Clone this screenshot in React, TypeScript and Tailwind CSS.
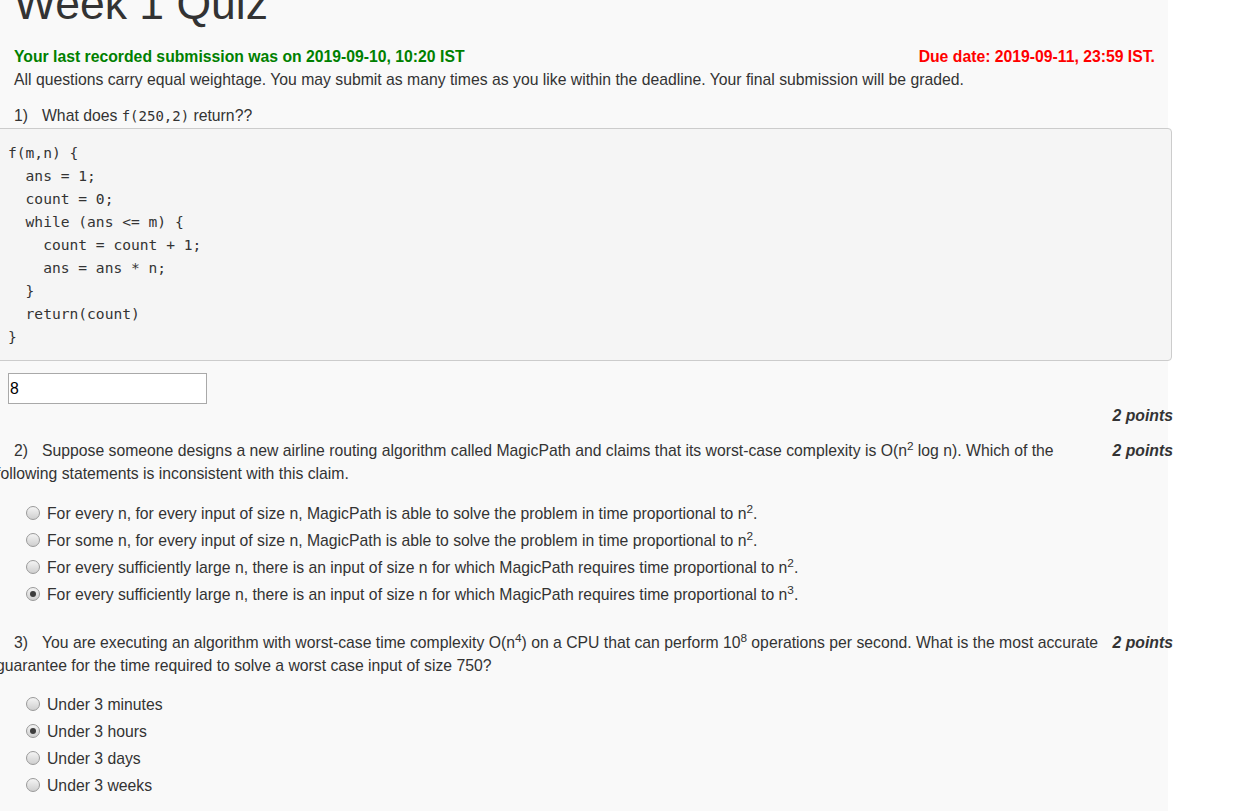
import type { ReactNode } from 'react';

const CODE = [
  'f(m,n) {',
  '  ans = 1;',
  '  count = 0;',
  '  while (ans <= m) {',
  '    count = count + 1;',
  '    ans = ans * n;',
  '  }',
  '  return(count)',
  '}',
];

function Radio({ checked }: { checked?: boolean }) {
  return (
    <span className="w-[14px] h-[14px] rounded-full border border-[#9a9a9a] bg-linear-to-b from-[#f4f4f4] to-[#cfcfcf] flex items-center justify-center shrink-0">
      {checked && <span className="w-[6px] h-[6px] rounded-full bg-[#3d3d3d]" />}
    </span>
  );
}

function Option({ checked, children }: { checked?: boolean; children: ReactNode }) {
  return (
    <div className="flex items-center gap-[7px] h-[27px]">
      <Radio checked={checked} />
      <span>{children}</span>
    </div>
  );
}

function Question({ num, points, children }: { num: string; points?: boolean; children: ReactNode }) {
  return (
    <div className="-ml-[18px] w-[1177px] flex">
      <p className="flex-1 indent-[18px]">
        <span className="inline-block w-[28px] indent-0">{num}</span>
        {children}
      </p>
      {points && <span className="pl-[14px] font-bold italic shrink-0">2 points</span>}
    </div>
  );
}

export default function App() {
  return (
    <div className="min-h-screen bg-white overflow-hidden font-['Liberation_Sans',Arial,sans-serif] text-[15.75px] leading-[23px] text-[#333]">
      <div className="w-[1168px] min-h-screen bg-[#f9f9f9] pl-[14px] pr-[13px] pb-[20px]">
        <h1 className="-mt-[21px] text-[44.5px] leading-[49.5px] font-normal">Week 1 Quiz</h1>

        <div className="mt-[16px] flex justify-between font-bold">
          <span className="text-[#008000]">Your last recorded submission was on 2019-09-10, 10:20 IST</span>
          <span className="text-[#ff0000]">Due date: 2019-09-11, 23:59 IST.</span>
        </div>
        <p>All questions carry equal weightage. You may submit as many times as you like within the deadline. Your final submission will be graded.</p>

        <p className="mt-[13px]">
          <span className="inline-block w-[28px]">1)</span>
          What does <code className="font-['DejaVu_Sans_Mono',monospace] text-[14px]">f(250,2)</code> return??
        </p>

        <pre className="-ml-[18px] w-[1176px] bg-[#f5f5f5] border border-[#ccc] rounded-[4px] pt-[12px] pb-[12px] pl-[11px] font-['DejaVu_Sans_Mono',monospace] text-[14.6px] leading-[23px] text-[#333]">
          {CODE.join('\n')}
        </pre>

        <div className="mt-[12px] -ml-[6px] w-[199px] h-[31px] bg-white border border-[#a9a9a9] flex items-center pl-[1px] text-black">
          8
        </div>

        <div className="-ml-[18px] w-[1177px] text-right font-bold italic">2 points</div>

        <div className="mt-[12px]">
          <Question num="2)" points>
            Suppose someone designs a new airline routing algorithm called MagicPath and claims that its worst-case complexity is O(n<sup>2</sup> log n). Which of the following statements is inconsistent with this claim.
          </Question>
        </div>

        <div className="mt-[15px] ml-[12px]">
          <Option>For every n, for every input of size n, MagicPath is able to solve the problem in time proportional to n<sup>2</sup>.</Option>
          <Option>For some n, for every input of size n, MagicPath is able to solve the problem in time proportional to n<sup>2</sup>.</Option>
          <Option>For every sufficiently large n, there is an input of size n for which MagicPath requires time proportional to n<sup>2</sup>.</Option>
          <Option checked>For every sufficiently large n, there is an input of size n for which MagicPath requires time proportional to n<sup>3</sup>.</Option>
        </div>

        <div className="mt-[23px]">
          <Question num="3)" points>
            You are executing an algorithm with worst-case time complexity O(n<sup>4</sup>) on a CPU that can perform 10<sup>8</sup> operations per second. What is the most accurate guarantee for the time required to solve a worst case input of size 750?
          </Question>
        </div>

        <div className="mt-[14px] ml-[12px]">
          <Option>Under 3 minutes</Option>
          <Option checked>Under 3 hours</Option>
          <Option>Under 3 days</Option>
          <Option>Under 3 weeks</Option>
        </div>
      </div>
    </div>
  );
}
